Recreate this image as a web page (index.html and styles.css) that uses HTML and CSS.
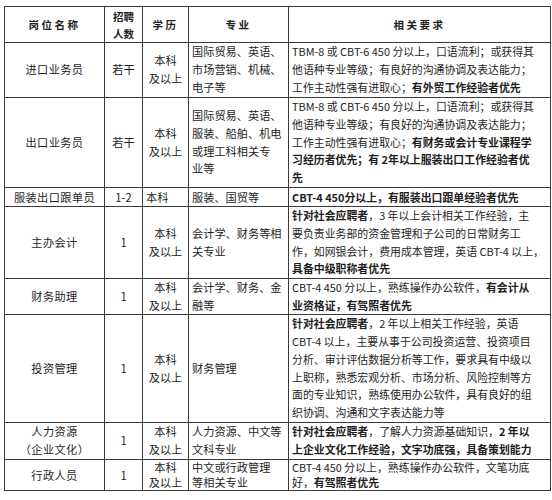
FILE: index.html
```html
<!DOCTYPE html>
<html lang="zh-CN">
<head>
<meta charset="utf-8">
<link rel="stylesheet" href="styles.css">
</head>
<body>
<div class="page">
<table class="jobs">
  <colgroup>
    <col class="c-name"><col class="c-num"><col class="c-edu"><col class="c-major"><col class="c-req">
  </colgroup>
  <thead>
    <tr class="r-head">
      <th class="spaced">岗位名称</th>
      <th>招聘<br>人数</th>
      <th class="spaced">学历</th>
      <th class="spaced">专业</th>
      <th class="spaced">相关要求</th>
    </tr>
  </thead>
  <tbody>
    <tr class="r1">
      <td class="name">进口业务员</td>
      <td class="num">若干</td>
      <td class="edu">本科<br>及以上</td>
      <td class="major">国际贸易、英语、<br>市场营销、机械、<br>电子等</td>
      <td class="req">TBM-8 或 CBT-6 450 分以上，口语流利；或获得其<br>他语种专业等级；有良好的沟通协调及表达能力；<br>工作主动性强有进取心；<b>有外贸工作经验者优先</b></td>
    </tr>
    <tr class="r2">
      <td class="name">出口业务员</td>
      <td class="num">若干</td>
      <td class="edu">本科<br>及以上</td>
      <td class="major">国际贸易、英语、<br>服装、船舶、机电<br>或理工科相关专<br>业等</td>
      <td class="req">TBM-8 或 CBT-6 450 分以上，口语流利；或获得其<br>他语种专业等级；有良好的沟通协调及表达能力；<br>工作主动性强有进取心；<b>有财务或会计专业课程学<br>习经历者优先；有 2年以上服装出口工作经验者优<br>先</b></td>
    </tr>
    <tr class="r3">
      <td class="name">服装出口跟单员</td>
      <td class="num">1-2</td>
      <td class="edu left">本科</td>
      <td class="major">服装、国贸等</td>
      <td class="req"><b>CBT-4 450分以上，有服装出口跟单经验者优先</b></td>
    </tr>
    <tr class="r4">
      <td class="name">主办会计</td>
      <td class="num">1</td>
      <td class="edu">本科<br>及以上</td>
      <td class="major">会计学、财务等相<br>关专业</td>
      <td class="req"><b>针对社会应聘者</b>，3 年以上会计相关工作经验，主<br>要负责业务部的资金管理和子公司的日常财务工<br>作，如网银会计，费用成本管理，英语 CBT-4 以上，<br><b>具备中级职称者优先</b></td>
    </tr>
    <tr class="r5">
      <td class="name">财务助理</td>
      <td class="num">1</td>
      <td class="edu">本科<br>及以上</td>
      <td class="major">会计学、财务、金<br>融等</td>
      <td class="req">CBT-4 450 分以上，熟练操作办公软件，<b>有会计从<br>业资格证，有驾照者优先</b></td>
    </tr>
    <tr class="r6">
      <td class="name">投资管理</td>
      <td class="num">1</td>
      <td class="edu">本科<br>及以上</td>
      <td class="major">财务管理</td>
      <td class="req"><b>针对社会应聘者</b>，2 年以上相关工作经验，英语<br>CBT-4 以上，主要从事于公司投资运营、投资项目<br>分析、审计评估数据分析等工作，要求具有中级以<br>上职称，熟悉宏观分析、市场分析、风险控制等方<br>面的专业知识，熟练使用办公软件，具有良好的组<br>织协调、沟通和文字表达能力等</td>
    </tr>
    <tr class="r7">
      <td class="name">人力资源<br>（企业文化）</td>
      <td class="num">1</td>
      <td class="edu">本科<br>及以上</td>
      <td class="major">人力资源、中文等<br>文科专业</td>
      <td class="req"><b>针对社会应聘者</b>，了解人力资源基础知识，<b>2 年以<br>上企业文化工作经验，文字功底强，具备策划能力</b></td>
    </tr>
    <tr class="r8">
      <td class="name">行政人员</td>
      <td class="num">1</td>
      <td class="edu">本科<br>及以上</td>
      <td class="major">中文或行政管理<br>等相关专业</td>
      <td class="req">CBT-4 450 分以上，熟练操作办公软件，文笔功底<br>好，<b>有驾照者优先</b></td>
    </tr>
  </tbody>
</table>
</div>
</body>
</html>
```

FILE: styles.css
```css
html, body {
  margin: 0;
  padding: 0;
  background: #ffffff;
}
.page {
  padding: 6px 2px 0 4px;
}
.jobs {
  border-collapse: collapse;
  table-layout: fixed;
  width: 546px;
  font-family: "Noto Sans CJK SC", "Liberation Sans", sans-serif;
  font-size: 11.2px;
  line-height: 17.8px;
  color: #1e1e1e;
  border: 1px solid #222222;
}
.c-name { width: 100px; }
.c-num { width: 38px; }
.c-edu { width: 46px; }
.c-major { width: 100px; }
.c-req { width: 262px; }

.jobs th, .jobs td {
  border: 1px solid #3a3a3a;
  padding: 0 3px;
  vertical-align: middle;
  overflow: hidden;
  white-space: nowrap;
}
.jobs th {
  font-weight: 700;
  font-size: 10.5px;
  text-align: center;
  line-height: 17px;
}
.jobs th.spaced { letter-spacing: 2.5px; }
.jobs b { font-weight: 700; }

.name { text-align: center; letter-spacing: 0.4px; }
.num { text-align: center; }
.edu { text-align: center; }
.edu.left { text-align: left; }
.major { text-align: left; padding-left: 4px; }
.req { text-align: left; padding-left: 4px; font-size: 10.9px; letter-spacing: 0; }

.r-head { height: 36px; }
.r1 { height: 55px; }
.r2 { height: 90px; }
.r3 { height: 19px; }
.r3 td { line-height: 17px; }
.r4 { height: 72px; }
.r5 { height: 36px; }
.r5 td { line-height: 17.4px; }
.r6 { height: 108px; }
.r7 { height: 37px; }
.r8 { height: 31px; }
.r8 td { line-height: 15px; }
```
